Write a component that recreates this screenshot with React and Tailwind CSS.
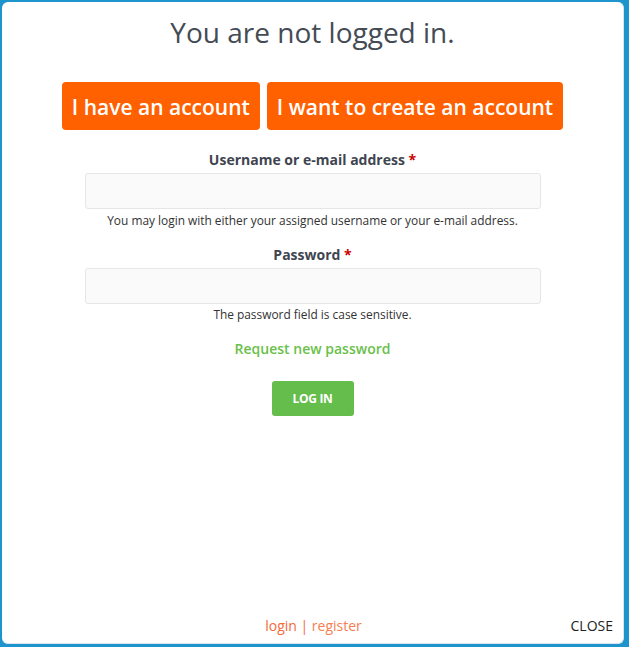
const App = () => {
  return (
    <div className="h-[647px] w-full bg-[#1d94cc] pt-[2px] pl-[2px] pr-[5px] pb-[3px] font-['Open_Sans',sans-serif]">
      <div className="h-full rounded-md bg-white flex flex-col items-center border-r border-b border-[#d9e6ee]">
        <h1 className="mt-[11px] text-[28px] leading-[38px] text-[#444b55]">You are not logged in.</h1>

        <div className="mt-[31px] flex gap-[7px]">
          <button className="h-[48px] px-[10px] pt-[4px] rounded-[4px] bg-[#ff6000] text-white text-[21px] font-semibold">
            I have an account
          </button>
          <button className="h-[48px] px-[10px] pt-[4px] rounded-[4px] bg-[#ff6000] text-white text-[21px] font-semibold">
            I want to create an account
          </button>
        </div>

        <form className="mt-[20px] w-[456px] flex flex-col items-center" onSubmit={(e) => e.preventDefault()}>
          <label className="text-[14px] leading-[20px] font-bold text-[#3f4550]">
            Username or e-mail address <span className="text-[#cc0000]">*</span>
          </label>
          <input
            type="text"
            className="mt-[3px] w-full h-[36px] rounded-[3px] border border-[#e6e6e6] bg-[#fafafa] focus:outline-none"
          />
          <p className="mt-[2px] text-[11.9px] leading-[18px] text-[#333]">
            You may login with either your assigned username or your e-mail address.
          </p>

          <label className="mt-[16px] text-[14px] leading-[20px] font-bold text-[#3f4550]">
            Password <span className="text-[#cc0000]">*</span>
          </label>
          <input
            type="password"
            className="mt-[3px] w-full h-[36px] rounded-[3px] border border-[#e6e6e6] bg-[#fafafa] focus:outline-none"
          />
          <p className="mt-[1px] text-[11.9px] leading-[18px] text-[#333]">The password field is case sensitive.</p>

          <a href="#" className="mt-[16px] text-[14px] leading-[20px] font-semibold text-[#6abf4b]">
            Request new password
          </a>

          <button className="mt-[22px] h-[35px] w-[82px] rounded-[3px] bg-[#65bd4b] text-white text-[12px] font-bold uppercase tracking-[-0.3px]">
            Log in
          </button>
        </form>

        <div className="mt-auto mb-[7px] w-full flex items-end">
          <div className="flex-1" />
          <div className="ml-[12px] text-[14px] leading-[20px] text-[#f26a3a]">
            <a href="#">login</a> | <a href="#" className="text-[#f47d52]">register</a>
          </div>
          <div className="flex-1 flex justify-end pr-[10px]">
            <button className="text-[14px] leading-[20px] text-[#222] uppercase">Close</button>
          </div>
        </div>
      </div>
    </div>
  );
};

export default App;
